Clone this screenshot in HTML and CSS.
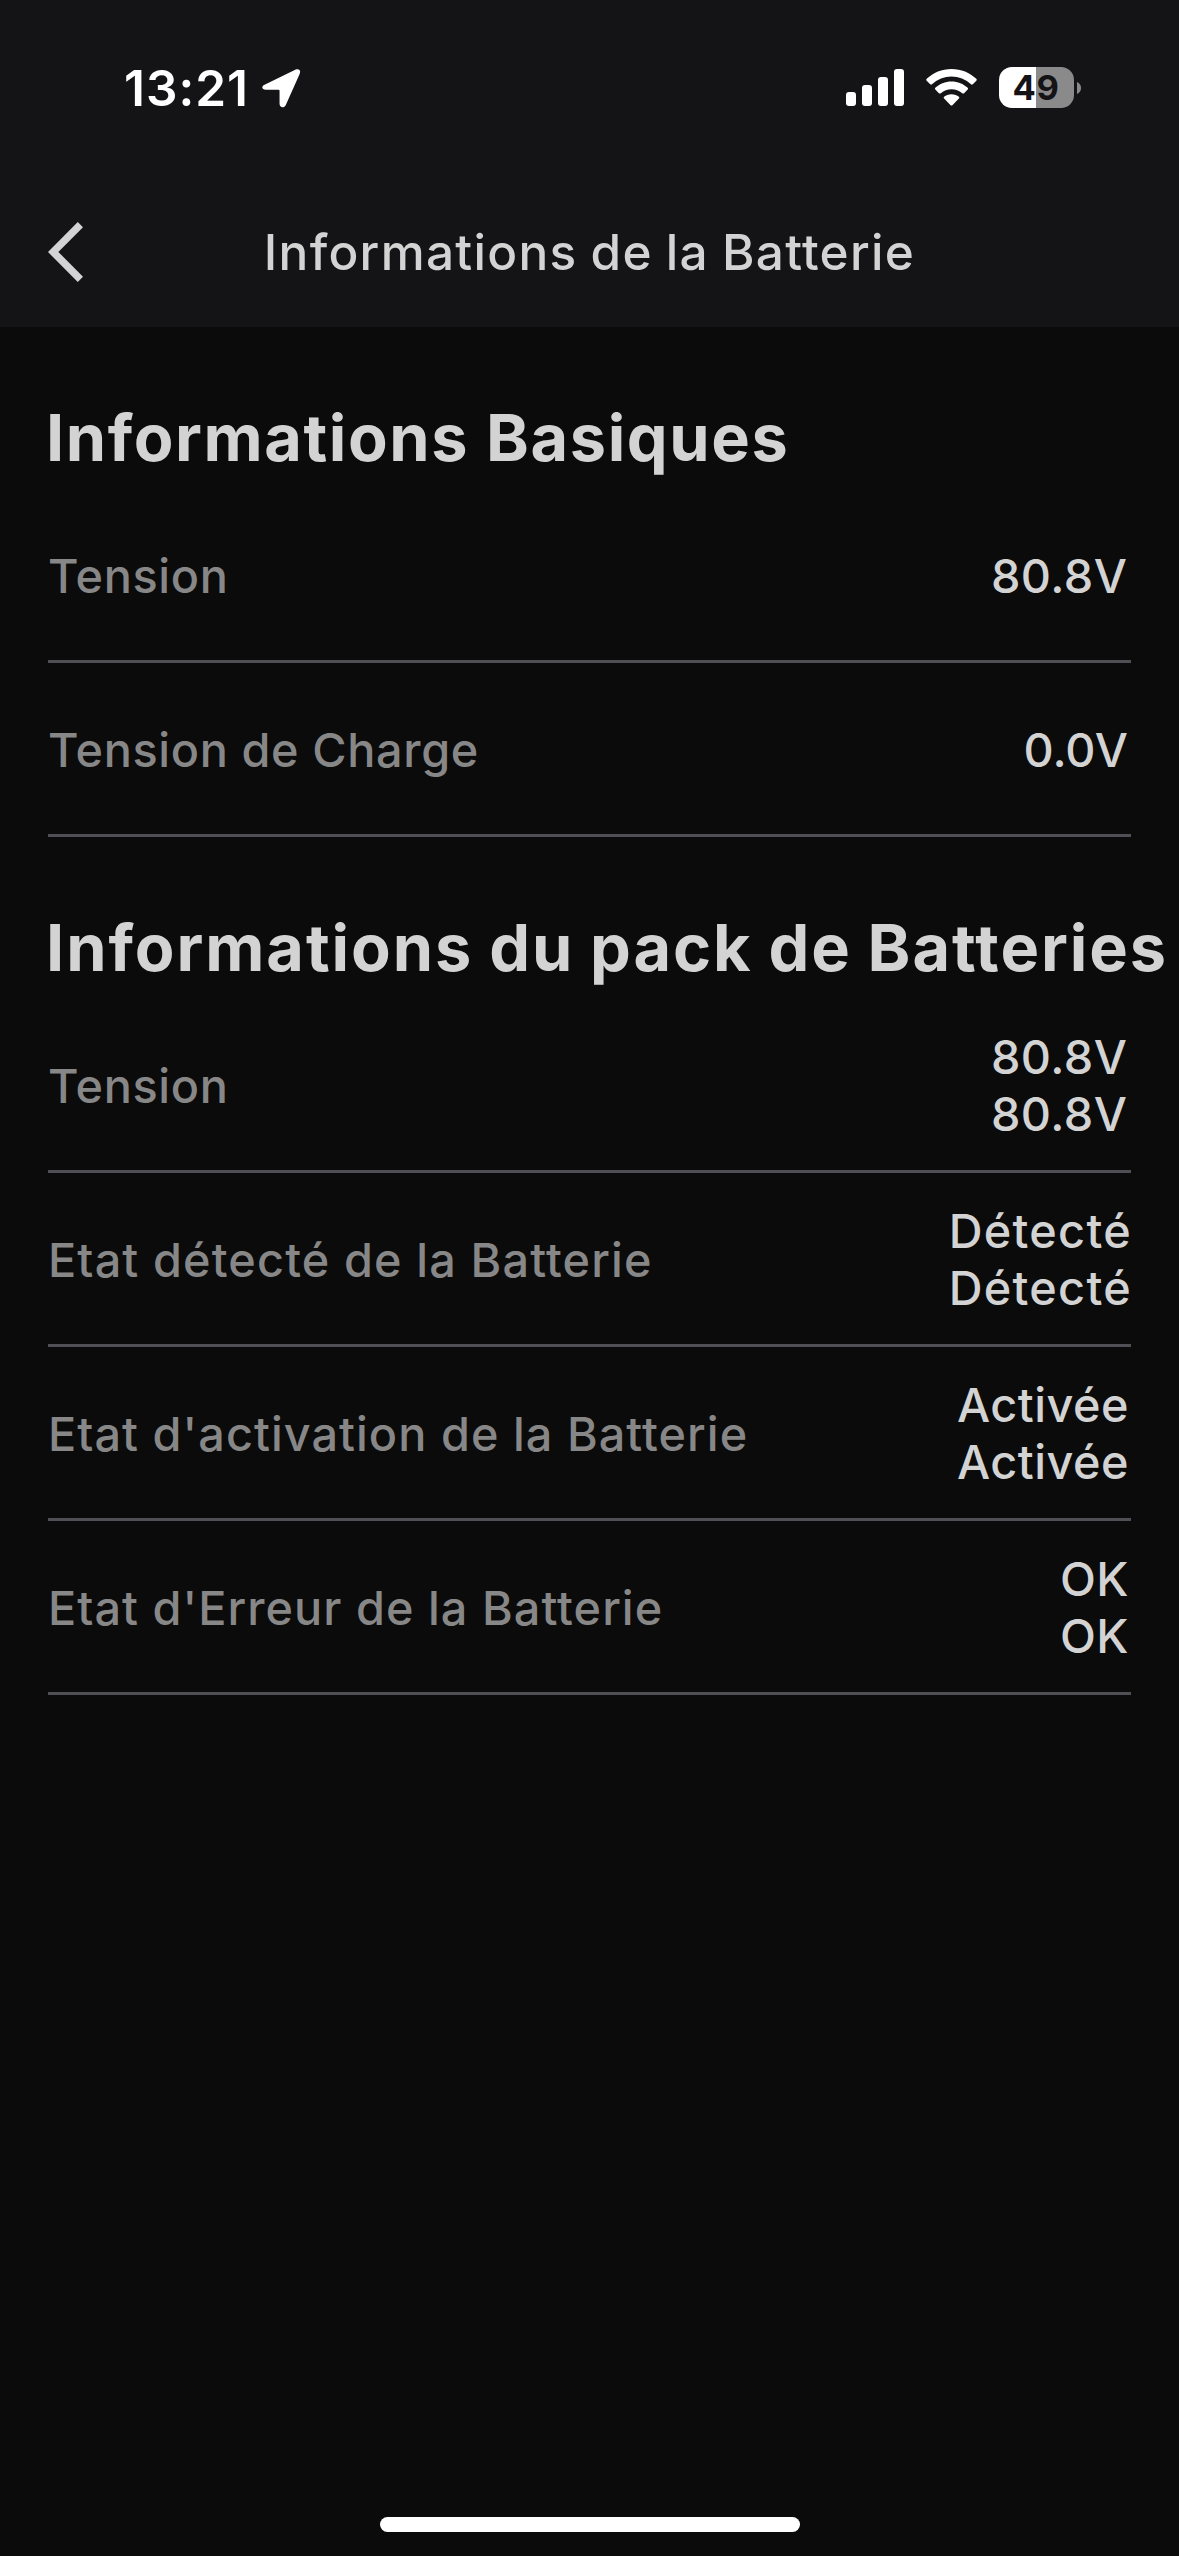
FILE: index.html
```html
<!DOCTYPE html>
<html lang="fr">
<head>
<meta charset="utf-8">
<title>Informations de la Batterie</title>
<link rel="stylesheet" href="styles.css">
</head>
<body>
<div class="screen">
  <header class="header">
    <div class="status">
      <div class="status__left">
        <span class="status__time">13:21</span>
        <svg class="status__location" viewBox="0 0 40 40" aria-hidden="true"><path d="M2.6 16.2 L34.6 .6 C38 -.9 40.1 1.6 38.6 5 L24.4 36.8 C22.8 40.4 18 39.8 18 35.6 V22.3 Q18 21.2 16.9 21.2 H3.9 C-.2 21.2 -1 17.9 2.6 16.2 Z"/></svg>
      </div>
      <div class="status__right">
        <svg class="status__signal" viewBox="0 0 58 37" aria-hidden="true"><rect y="23" width="10" height="14" rx="3"/><rect x="16" y="16" width="10" height="21" rx="3"/><rect x="32" y="8" width="10" height="29" rx="3"/><rect x="48" width="10" height="37" rx="3"/></svg>
        <svg class="status__wifi" viewBox="0 0 51 37" aria-hidden="true"><path d="M25.5 0 C35.1 0 43.8 3.7 50.3 9.8 Q51.2 10.8 50.3 11.8 L46.8 15.3 Q45.9 16.1 45 15.3 A28.4 28.4 0 0 0 6 15.3 Q5.1 16.1 4.2 15.3 L.7 11.8 Q-.2 10.8 .7 9.8 C7.2 3.7 15.9 0 25.5 0 Z"/><path d="M25.5 12.4 C31.8 12.4 37.4 14.8 41.7 18.7 Q42.6 19.7 41.7 20.6 L38.1 24.2 Q37.2 25 36.2 24.2 A16.4 16.4 0 0 0 14.8 24.2 Q13.8 25 12.9 24.2 L9.3 20.6 Q8.4 19.7 9.3 18.7 C13.6 14.8 19.2 12.4 25.5 12.4 Z"/><path d="M25.5 25.2 C28.5 25.2 31 26.1 32.9 27.7 Q33.9 28.6 32.9 29.6 L26.4 36.2 Q25.5 37 24.6 36.2 L18.1 29.6 Q17.1 28.6 18.1 27.7 C20 26.1 22.5 25.2 25.5 25.2 Z"/></svg>
        <div class="battery">
          <div class="battery__body"><span class="battery__level">49</span></div>
          <svg class="battery__tip" viewBox="0 0 4 12" aria-hidden="true"><path d="M0 0 C2.6 1 4 3.4 4 6 C4 8.6 2.6 11 0 12 Z"/></svg>
        </div>
      </div>
    </div>
    <nav class="nav">
      <svg class="nav__back" viewBox="0 0 35 60" aria-hidden="true"><path d="M32.4 2.7 L5.2 30 L32.4 57.3"/></svg>
      <h1 class="nav__title">Informations de la Batterie</h1>
    </nav>
  </header>

  <main class="content">
    <section>
      <h2 class="heading">Informations Basiques</h2>
      <div class="row"><span class="row__label row__label--tight">Tension</span><span class="row__value row__value--number">80.8V</span></div>
      <div class="row"><span class="row__label row__label--tight">Tension de Charge</span><span class="row__value row__value--zero">0.0V</span></div>
    </section>
    <section>
      <h2 class="heading heading--long">Informations du pack de Batteries</h2>
      <div class="row"><span class="row__label row__label--tight">Tension</span><span class="row__value row__value--number">80.8V<br>80.8V</span></div>
      <div class="row"><span class="row__label row__label--wide">Etat détecté de la Batterie</span><span class="row__value row__value--wide">Détecté<br>Détecté</span></div>
      <div class="row"><span class="row__label">Etat d'activation de la Batterie</span><span class="row__value">Activée<br>Activée</span></div>
      <div class="row"><span class="row__label">Etat d'Erreur de la Batterie</span><span class="row__value">OK<br>OK</span></div>
    </section>
  </main>

  <div class="home-bar"></div>
</div>
</body>
</html>
```

FILE: styles.css
```css
* {
  box-sizing: border-box;
}

body {
  margin: 0;
  background: #0b0b0b;
  color: #d3d3d3;
  font-family: Inter, "Liberation Sans", sans-serif;
  overflow: hidden;
}

.screen {
  display: flex;
  flex-direction: column;
  width: 1179px;
  height: 2556px;
}

.header {
  height: 327px;
  background: #141416;
}

/* Status bar */
.status {
  display: flex;
  justify-content: space-between;
  align-items: center;
  height: 177px;
  padding: 0 98px 2px 124px;
  color: #fff;
  fill: #fff;
}

.status__left,
.status__right {
  display: flex;
  align-items: center;
}

.status__left {
  gap: 13px;
}

.status__right {
  gap: 22px;
}

.status__time {
  font-size: 49.5px;
  font-weight: 600;
  line-height: 60px;
  letter-spacing: 1px;
}

.status__location {
  width: 39px;
  height: 39px;
  margin-top: 1px;
}

.status__signal {
  width: 58px;
  height: 37px;
}

.status__wifi {
  width: 51px;
  height: 37px;
}

.battery {
  display: flex;
  align-items: center;
  gap: 3px;
}

.battery__body {
  display: flex;
  align-items: center;
  justify-content: center;
  width: 75px;
  height: 41px;
  padding-right: 1px;
  border-radius: 13px;
  background: linear-gradient(to right, #fff 37px, #8a8a8b 37px);
}

.battery__level {
  color: #141416;
  font-size: 34.5px;
  font-weight: 700;
  line-height: 41px;
  letter-spacing: 0.7px;
}

.battery__tip {
  width: 4px;
  height: 12px;
  fill: #8a8a8b;
}

/* Navigation bar */
.nav {
  display: grid;
  grid-template-columns: 48px 1fr 48px;
  align-items: center;
  height: 150px;
  padding: 0 48px;
}

.nav__back {
  width: 35px;
  height: 60px;
  fill: none;
  stroke: #d3d3d3;
  stroke-width: 7.4;
}

.nav__title {
  margin: 0;
  font-size: 49.5px;
  font-weight: 500;
  line-height: 60px;
  letter-spacing: 1.3px;
  word-spacing: -1.5px;
  text-align: center;
  white-space: nowrap;
}

/* Sections */
.content {
  flex: 1;
  padding: 0 48px;
}

.heading {
  height: 162px;
  margin: 0 0 0 -2px;
  padding-top: 60px;
  font-size: 64.8px;
  font-weight: 700;
  line-height: 101px;
  letter-spacing: 1.6px;
  white-space: nowrap;
}

.heading--long {
  letter-spacing: 1.95px;
  word-spacing: -1.5px;
}

.row {
  display: flex;
  align-items: center;
  justify-content: space-between;
  height: 174px;
  padding-top: 3px;
  border-bottom: 3px solid #4f4f55;
  font-size: 46.8px;
  font-weight: 500;
  line-height: 57px;
}

.row__label {
  color: #878787;
  letter-spacing: 1.05px;
}

.row__label--tight {
  letter-spacing: 0.64px;
}

.row__label--wide {
  letter-spacing: 1.14px;
}

.row__value {
  margin-right: 2px;
  letter-spacing: 0.5px;
  text-align: right;
}

.row__value--number {
  margin-right: 3.5px;
}

.row__value--zero {
  margin-right: 3px;
  letter-spacing: 0;
}

.row__value--wide {
  margin-right: -1px;
  letter-spacing: 1.3px;
}

.home-bar {
  align-self: center;
  width: 420px;
  height: 15px;
  margin-bottom: 24px;
  border-radius: 7.5px;
  background: #fff;
}
```
